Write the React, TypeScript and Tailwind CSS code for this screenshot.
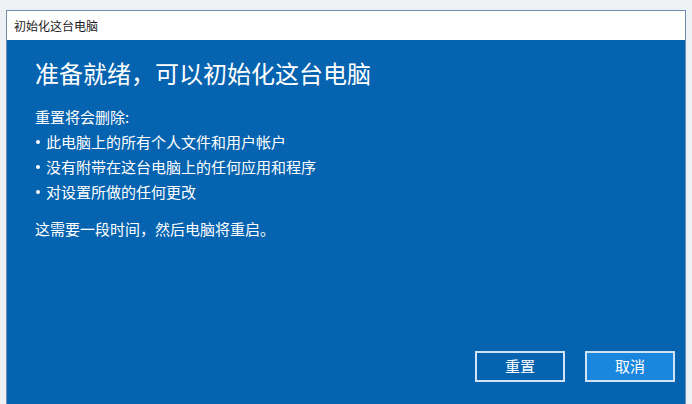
import React from "react";

const font = { fontFamily: '"Microsoft YaHei", "Noto Sans CJK SC", sans-serif' };

export default function App() {
  const items = [
    "此电脑上的所有个人文件和用户帐户",
    "没有附带在这台电脑上的任何应用和程序",
    "对设置所做的任何更改",
  ];

  return (
    <div
      className="w-[692px] h-[404px] bg-[#eef1f3] pt-[10px] pl-[6px] pr-[6px] flex flex-col overflow-hidden"
      style={font}
    >
      <div className="flex-1 flex flex-col border border-[#6f8fae] border-b-0">
        <div className="h-[29px] bg-white flex items-center pl-[7px] text-[12px] text-[#1a1a1a]">
          初始化这台电脑
        </div>
        <div className="flex-1 bg-[#0563b0] flex flex-col pl-[28px] pr-[10px] text-white">
          <h1 className="mt-[17px] text-[24px] leading-[32px] font-normal">
            准备就绪，可以初始化这台电脑
          </h1>
          <p className="mt-[15px] text-[15px] leading-[25px]">重置将会删除:</p>
          <ul className="text-[15px] leading-[25px]">
            {items.map((t) => (
              <li key={t} className="flex items-center">
                <span className="ml-[1px] mr-[6px] w-[4px] h-[4px] rounded-full bg-white shrink-0" />
                <span>{t}</span>
              </li>
            ))}
          </ul>
          <p className="mt-[12px] text-[15px] leading-[25px]">这需要一段时间，然后电脑将重启。</p>
          <div className="mt-auto mb-[22px] flex justify-end gap-[20px]">
            <button className="w-[90px] h-[31px] border-2 border-[#cfe3f5] bg-[#0563b0] text-[15px] text-white">
              重置
            </button>
            <button className="w-[90px] h-[31px] border-2 border-[#cfe3f5] bg-[#1a86de] text-[15px] text-white">
              取消
            </button>
          </div>
        </div>
      </div>
    </div>
  );
}
